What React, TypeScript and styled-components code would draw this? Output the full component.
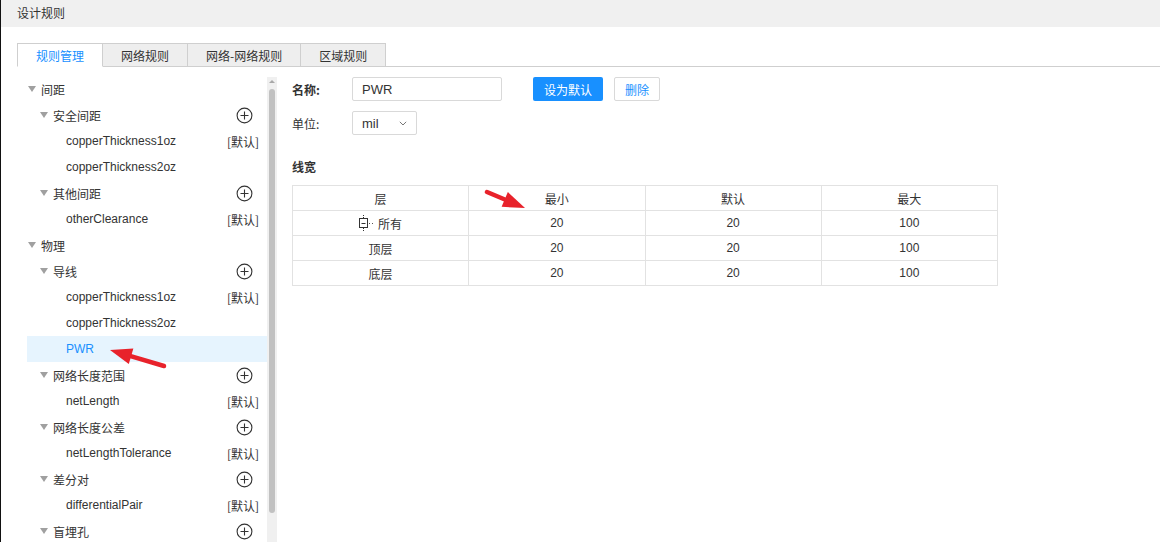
import React from 'react';
import styled, { createGlobalStyle } from 'styled-components';

const GlobalStyle = createGlobalStyle`
  html, body {
    margin: 0;
    padding: 0;
    height: 542px;
    overflow: hidden;
    background: #fff;
  }
  body {
    font-family: "Liberation Sans", "Noto Sans CJK SC", sans-serif;
    font-size: 12px;
    color: #333;
  }
`;

type TreeNode = {
    label: string;
    level: number;
    group?: boolean;
    add?: boolean;
    isDefault?: boolean;
    selected?: boolean;
};

const treeData: TreeNode[] = [
    { label: '间距', level: 1, group: true },
    { label: '安全间距', level: 2, group: true, add: true },
    { label: 'copperThickness1oz', level: 3, isDefault: true },
    { label: 'copperThickness2oz', level: 3 },
    { label: '其他间距', level: 2, group: true, add: true },
    { label: 'otherClearance', level: 3, isDefault: true },
    { label: '物理', level: 1, group: true },
    { label: '导线', level: 2, group: true, add: true },
    { label: 'copperThickness1oz', level: 3, isDefault: true },
    { label: 'copperThickness2oz', level: 3 },
    { label: 'PWR', level: 3, selected: true },
    { label: '网络长度范围', level: 2, group: true, add: true },
    { label: 'netLength', level: 3, isDefault: true },
    { label: '网络长度公差', level: 2, group: true, add: true },
    { label: 'netLengthTolerance', level: 3, isDefault: true },
    { label: '差分对', level: 2, group: true, add: true },
    { label: 'differentialPair', level: 3, isDefault: true },
    { label: '盲埋孔', level: 2, group: true, add: true },
];

const tabs = ['规则管理', '网络规则', '网络-网络规则', '区域规则'];

const widthRows = [
    { layer: '所有', min: 20, def: 20, max: 100, root: true },
    { layer: '顶层', min: 20, def: 20, max: 100 },
    { layer: '底层', min: 20, def: 20, max: 100 },
];

const PlusIcon = () => (
    <svg width="17" height="17" viewBox="0 0 17 17">
        <circle cx="8.5" cy="8.5" r="7.4" fill="none" stroke="#333" strokeWidth="1.1" />
        <path d="M4.5 8.5h8M8.5 4.5v8" stroke="#333" strokeWidth="1.1" />
    </svg>
);

// tree-style collapse box with dotted connector lines
const CollapseIcon = () => (
    <svg width="16" height="16" viewBox="0 0 16 16">
        <path d="M4.5 0v3M4.5 13v3" stroke="#333" strokeWidth="1" strokeDasharray="1 1" />
        <rect x="0.5" y="3.5" width="8" height="9" fill="#fff" stroke="#333" strokeWidth="1" />
        <path d="M2.5 8.5h4" stroke="#333" strokeWidth="1" />
        <path d="M10 8.5h1M13 8.5h1" stroke="#555" strokeWidth="1" />
    </svg>
);

const ChevronDown = () => (
    <svg width="8" height="5" viewBox="0 0 8 5">
        <path d="M0.8 0.8L4 4l3.2-3.2" fill="none" stroke="#777" strokeWidth="1" />
    </svg>
);

const RedArrow = ({ x1, y1, x2, y2 }: { x1: number; y1: number; x2: number; y2: number }) => {
    const dx = x2 - x1;
    const dy = y2 - y1;
    const len = Math.sqrt(dx * dx + dy * dy);
    const ux = dx / len;
    const uy = dy / len;
    const headLen = 22;
    const headW = 8;
    const bx = x2 - ux * headLen;
    const by = y2 - uy * headLen;
    const p1 = `${bx - uy * headW},${by + ux * headW}`;
    const p2 = `${bx + uy * headW},${by - ux * headW}`;
    return (
        <g>
            <line x1={x1} y1={y1} x2={bx + ux * 4} y2={by + uy * 4} stroke="#e8222b" strokeWidth="4.5" strokeLinecap="round" />
            <polygon points={`${x2},${y2} ${p1} ${p2}`} fill="#e8222b" />
        </g>
    );
};

const App = () => {
    return (
        <Window>
            <GlobalStyle />
            <TitleBar>设计规则</TitleBar>
            <Body>
                <TabBar>
                    {tabs.map((t, i) => (
                        <Tab key={t} $active={i === 0}>{t}</Tab>
                    ))}
                </TabBar>
                <Content>
                    <TreePanel>
                        {treeData.map((node, i) => (
                            <TreeRow key={i} $level={node.level} $selected={node.selected}>
                                {node.group ? <Caret /> : <CaretSpace />}
                                <TreeLabel $selected={node.selected}>{node.label}</TreeLabel>
                                {node.add && <AddButton><PlusIcon /></AddButton>}
                                {node.isDefault && <DefaultTag>[默认]</DefaultTag>}
                            </TreeRow>
                        ))}
                    </TreePanel>
                    <ScrollTrack>
                        <ScrollArrow />
                        <ScrollThumb />
                    </ScrollTrack>
                    <DetailPanel>
                        <FormRow>
                            <FieldLabel $bold>名称:</FieldLabel>
                            <TextInput>PWR</TextInput>
                            <PrimaryButton>设为默认</PrimaryButton>
                            <GhostButton>删除</GhostButton>
                        </FormRow>
                        <FormRow>
                            <FieldLabel>单位:</FieldLabel>
                            <Select>
                                <span>mil</span>
                                <ChevronDown />
                            </Select>
                        </FormRow>
                        <SectionTitle>线宽</SectionTitle>
                        <Table>
                            <thead>
                                <tr>
                                    <Th>层</Th>
                                    <Th>最小</Th>
                                    <Th>默认</Th>
                                    <Th>最大</Th>
                                </tr>
                            </thead>
                            <tbody>
                                {widthRows.map((r) => (
                                    <tr key={r.layer}>
                                        <Td>
                                            <LayerCell>
                                                {r.root && <CollapseIcon />}
                                                <span>{r.layer}</span>
                                            </LayerCell>
                                        </Td>
                                        <Td>{r.min}</Td>
                                        <Td>{r.def}</Td>
                                        <Td>{r.max}</Td>
                                    </tr>
                                ))}
                            </tbody>
                        </Table>
                    </DetailPanel>
                </Content>
            </Body>
            <Annotations width="1160" height="542" viewBox="0 0 1160 542">
                <RedArrow x1={487} y1={192} x2={525} y2={208} />
                <RedArrow x1={164} y1={366} x2={110} y2={350} />
            </Annotations>
        </Window>
    );
};

const Window = styled.div`
  position: relative;
  height: 542px;
  display: flex;
  flex-direction: column;
  border-left: 1px solid #111;
  box-sizing: border-box;
  overflow: hidden;
`;

const TitleBar = styled.div`
  height: 27px;
  line-height: 26px;
  padding-left: 16px;
  background: #f0f0f0;
  font-family: "Noto Sans CJK SC", sans-serif;
  color: #333;
`;

const Body = styled.div`
  flex: 1;
  display: flex;
  flex-direction: column;
  padding: 16px 0 0 16px;
  min-height: 0;
`;

const TabBar = styled.div`
  display: flex;
  height: 24px;
  border-bottom: 1px solid #cfcfcf;
  box-sizing: border-box;
`;

const Tab = styled.div<{ $active?: boolean }>`
  height: 24px;
  box-sizing: border-box;
  padding: 0 18px;
  min-width: 85px;
  display: flex;
  align-items: center;
  justify-content: center;
  font-family: "Noto Sans CJK SC", sans-serif;
  border: 1px solid #cfcfcf;
  border-left-width: ${(p) => (p.$active ? '1px' : '0')};
  border-bottom-color: ${(p) => (p.$active ? '#fff' : '#cfcfcf')};
  background: ${(p) => (p.$active ? '#fff' : '#eeeeee')};
  color: ${(p) => (p.$active ? '#1890ff' : '#333')};
  &:first-child {
    min-width: 86px;
  }
`;

const Content = styled.div`
  flex: 1;
  display: flex;
  min-height: 0;
`;

const TreePanel = styled.div`
  width: 240px;
  padding: 9px 0 0 10px;
  overflow: hidden;
`;

const TreeRow = styled.div<{ $level: number; $selected?: boolean }>`
  height: 26px;
  display: flex;
  align-items: center;
  padding-left: ${(p) => 1 + (p.$level - 1) * 12}px;
  padding-right: 8px;
  background: ${(p) => (p.$selected ? '#e6f4fe' : 'transparent')};
`;

const Caret = styled.span`
  width: 0;
  height: 0;
  border-left: 4.5px solid transparent;
  border-right: 4.5px solid transparent;
  border-top: 6px solid #a0a0a0;
  margin-right: 5px;
`;

const CaretSpace = styled.span`
  width: 14px;
`;

const TreeLabel = styled.span<{ $selected?: boolean }>`
  flex: 1;
  white-space: nowrap;
  color: ${(p) => (p.$selected ? '#1890ff' : '#333')};
  font-family: "Liberation Sans", "Noto Sans CJK SC", sans-serif;
`;

const AddButton = styled.span`
  display: flex;
  margin-right: 6px;
`;

const DefaultTag = styled.span`
  font-family: "Noto Sans CJK SC", sans-serif;
  color: #333;
`;

const ScrollTrack = styled.div`
  width: 10px;
  margin-top: 10px;
  background: #f0f0f0;
  display: flex;
  flex-direction: column;
  align-items: center;
`;

const ScrollArrow = styled.span`
  margin-top: 3px;
  width: 0;
  height: 0;
  border-left: 3px solid transparent;
  border-right: 3px solid transparent;
  border-bottom: 3px solid #a8a8a8;
`;

const ScrollThumb = styled.div`
  width: 6px;
  height: 424px;
  margin-top: 6px;
  border-radius: 3px;
  background: #c1c1c1;
`;

const DetailPanel = styled.div`
  flex: 1;
  padding: 10px 0 0 15px;
`;

const FormRow = styled.div`
  display: flex;
  align-items: center;
  height: 24px;
  margin-bottom: 10px;
`;

const FieldLabel = styled.span<{ $bold?: boolean }>`
  width: 60px;
  font-family: "Noto Sans CJK SC", sans-serif;
  font-weight: ${(p) => (p.$bold ? 700 : 400)};
  color: #333;
`;

const TextInput = styled.div`
  width: 150px;
  height: 24px;
  box-sizing: border-box;
  border: 1px solid #d9d9d9;
  border-radius: 2px;
  padding-left: 9px;
  display: flex;
  align-items: center;
  font-size: 13px;
`;

const PrimaryButton = styled.div`
  margin-left: 31px;
  width: 70px;
  height: 24px;
  border-radius: 2px;
  background: #1890ff;
  color: #fff;
  display: flex;
  align-items: center;
  justify-content: center;
  font-family: "Noto Sans CJK SC", sans-serif;
`;

const GhostButton = styled.div`
  margin-left: 11px;
  width: 46px;
  height: 24px;
  box-sizing: border-box;
  border: 1px solid #d9d9d9;
  border-radius: 2px;
  color: #1890ff;
  display: flex;
  align-items: center;
  justify-content: center;
  font-family: "Noto Sans CJK SC", sans-serif;
`;

const Select = styled.div`
  width: 65px;
  height: 24px;
  box-sizing: border-box;
  border: 1px solid #d9d9d9;
  border-radius: 2px;
  padding: 0 9px 0 9px;
  display: flex;
  align-items: center;
  justify-content: space-between;
  font-size: 13px;
`;

const SectionTitle = styled.div`
  margin-top: 22px;
  height: 20px;
  line-height: 20px;
  font-family: "Noto Sans CJK SC", sans-serif;
  font-weight: 700;
  margin-bottom: 8px;
`;

const Table = styled.table`
  width: 706px;
  border-collapse: collapse;
  table-layout: fixed;
`;

const Th = styled.th`
  height: 24px;
  padding: 0;
  border: 1px solid #e2e2e2;
  font-weight: 400;
  text-align: center;
  font-family: "Noto Sans CJK SC", sans-serif;
  color: #333;
`;

const Td = styled.td`
  height: 24px;
  padding: 0;
  border: 1px solid #e2e2e2;
  text-align: center;
  color: #333;
`;

const LayerCell = styled.div`
  display: flex;
  align-items: center;
  justify-content: center;
  height: 20px;
  font-family: "Noto Sans CJK SC", sans-serif;
  svg {
    margin-right: 3px;
  }
`;

const Annotations = styled.svg`
  position: absolute;
  left: -1px;
  top: 0;
  pointer-events: none;
`;

export default App;
